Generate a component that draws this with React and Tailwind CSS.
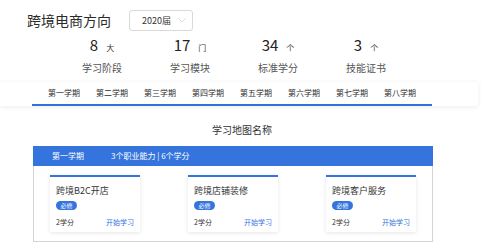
import React from "react";

const stats = [
  { num: "8", unit: "大", label: "学习阶段" },
  { num: "17", unit: "门", label: "学习模块" },
  { num: "34", unit: "个", label: "标准学分" },
  { num: "3", unit: "个", label: "技能证书" },
];

const terms = ["第一学期", "第二学期", "第三学期", "第四学期", "第五学期", "第六学期", "第七学期", "第八学期"];

const courses = ["跨境B2C开店", "跨境店铺装修", "跨境客户服务"];

const App = () => {
  return (
    <div
      className="w-[484px] h-[244px] bg-white overflow-hidden text-[#333]"
      style={{ fontFamily: '"Noto Sans CJK SC", "Noto Sans", sans-serif' }}
    >
      {/* Header */}
      <div className="flex items-center pl-[27px] pt-[10px] h-[31px]">
        <span className="text-[14px] leading-[21px] text-[#2b2b2b]">跨境电商方向</span>
        <div className="ml-[18px] w-[64px] h-[21px] border border-[#d9d9d9] rounded-[3px] flex items-center justify-between pl-[12px] pr-[6px]">
          <span className="text-[9px] leading-none text-[#333]">2020届</span>
          <svg width="8" height="5" viewBox="0 0 8 5" fill="none">
            <path d="M0.5 0.5 L4 4 L7.5 0.5" stroke="#d0d0d0" strokeWidth="0.8" />
          </svg>
        </div>
      </div>

      {/* Stats */}
      <div className="flex pl-[58px] mt-[6px]">
        {stats.map((s) => (
          <div key={s.label} className="w-[88px] flex flex-col items-center">
            <div className="flex items-baseline h-[16px]">
              <span className="text-[15px] leading-[16px] text-[#222]">{s.num}</span>
              <span className="text-[8px] leading-none ml-[8px] text-[#333]">{s.unit}</span>
            </div>
            <span className="mt-[8px] text-[10px] leading-[14px] text-[#555]">{s.label}</span>
          </div>
        ))}
      </div>

      {/* Tabs */}
      <div className="mt-[7px] w-[478px] h-[24px] bg-white shadow-[0_1px_5px_rgba(0,0,0,0.08)] pl-[32px]">
        <div className="w-[400px] h-[24px] border-b-2 border-[#2f72dc] flex justify-center items-center">
          {terms.map((t) => (
            <span key={t} className="w-[48px] text-center text-[8px] leading-none text-[#2b2b2b]">
              {t}
            </span>
          ))}
        </div>
      </div>

      {/* Map title */}
      <div className="mt-[17px] text-center text-[10px] leading-[14px] text-[#333]">学习地图名称</div>

      {/* Stage */}
      <div className="ml-[33px] mt-[9px] w-[400px]">
        <div className="h-[20px] bg-[#3574dd] flex items-center pl-[19px] text-white text-[8px] leading-none">
          <span>第一学期</span>
          <span className="ml-[27px]">3个职业能力 | 6个学分</span>
        </div>
        <div className="h-[76px] border border-t-0 border-[#d4d4d4] flex gap-[48px] pl-[16px] pt-[9px]">
          {courses.map((c) => (
            <div
              key={c}
              className="w-[90px] h-[57px] bg-white border-t-2 border-[#3574dd] shadow-[0_1px_4px_rgba(0,0,0,0.1)] px-[6px] pt-[8px] flex flex-col"
            >
              <span className="text-[9px] leading-[12px] text-[#333]">{c}</span>
              <span className="mt-[4px] w-[21px] h-[9px] rounded-full bg-[#3574dd] text-white text-[6px] leading-[9px] text-center">
                必修
              </span>
              <div className="mt-[9px] flex justify-between items-center">
                <span className="text-[7px] leading-none text-[#333]">2学分</span>
                <span className="text-[7px] leading-none text-[#3574dd]">开始学习</span>
              </div>
            </div>
          ))}
        </div>
      </div>
    </div>
  );
};

export default App;
